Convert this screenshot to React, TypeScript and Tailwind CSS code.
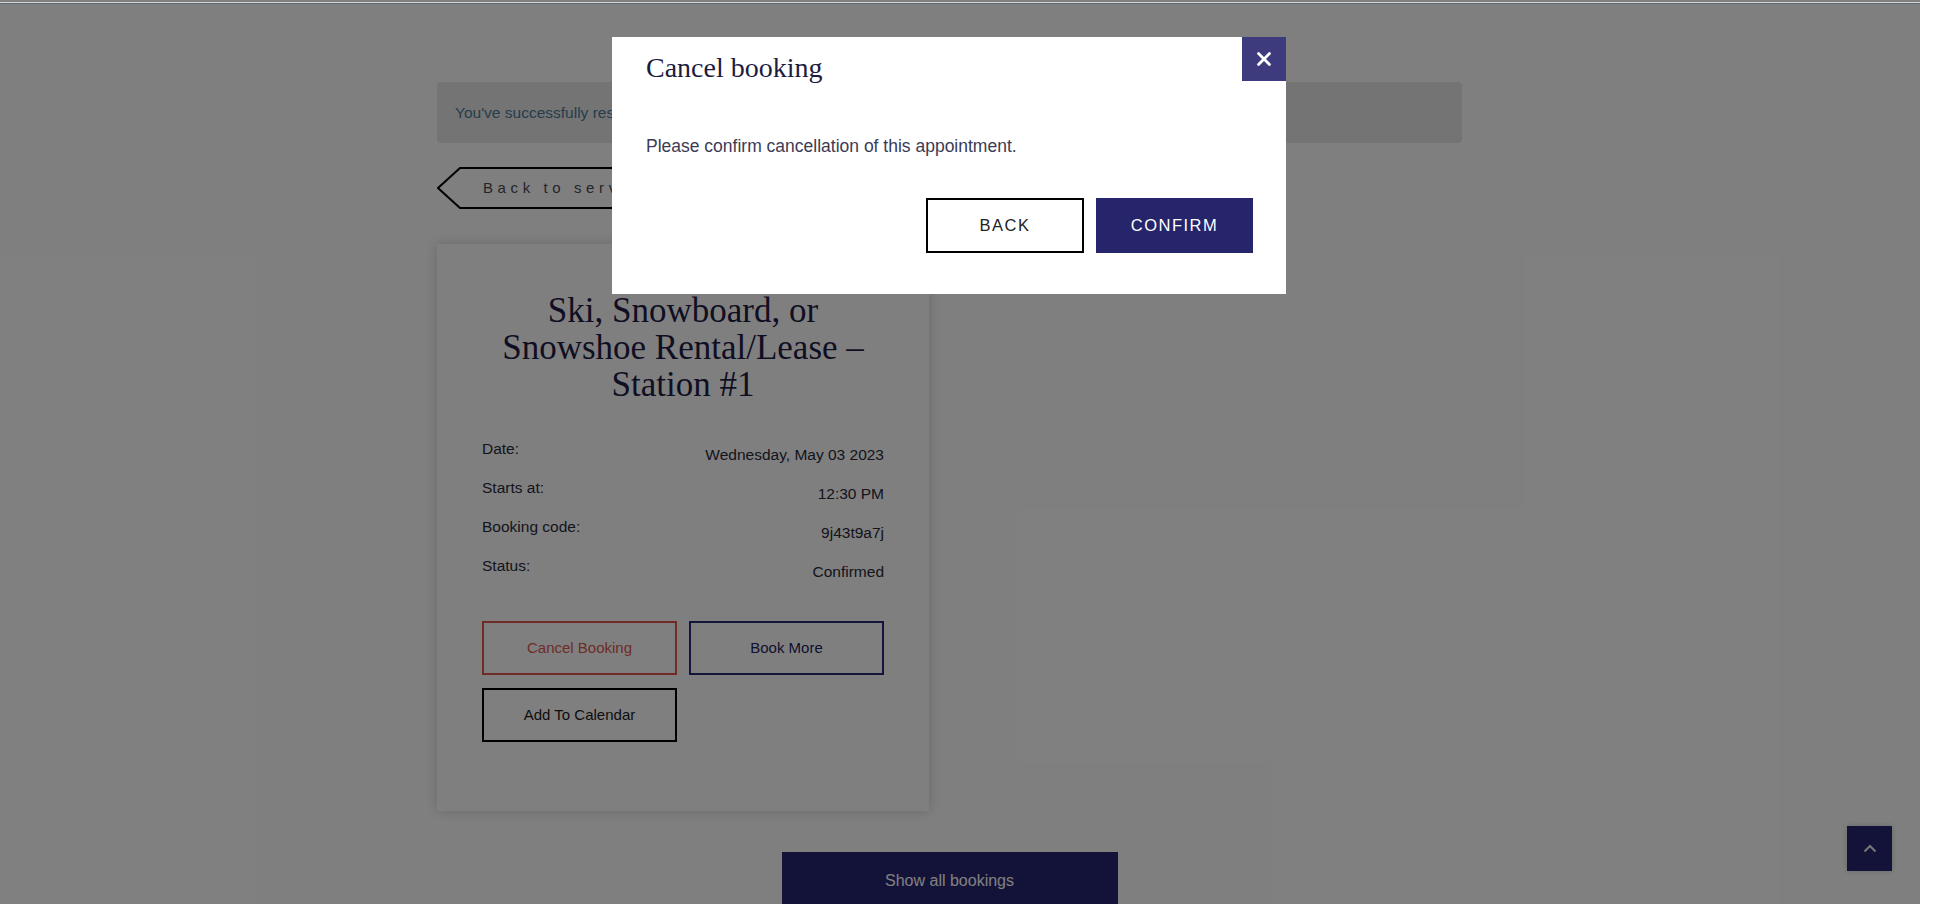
import React from 'react';

const details = [
  { label: 'Date:', value: 'Wednesday, May 03 2023' },
  { label: 'Starts at:', value: '12:30 PM' },
  { label: 'Booking code:', value: '9j43t9a7j' },
  { label: 'Status:', value: 'Confirmed' },
];

const sans = "font-['Liberation_Sans',Arial,sans-serif]";
const serif = "font-['Liberation_Serif','Times_New_Roman',serif]";

function BackToServices() {
  return (
    <div className="relative h-[42px] w-[270px] mt-[24px]">
      {/* arrow-shaped outline */}
      <svg className="absolute inset-0" width="270" height="42" viewBox="0 0 270 42">
        <polygon points="1,21 23,1 269,1 269,41 23,41" fill="none" stroke="#000" strokeWidth="2" />
      </svg>
      <span className={`relative flex h-full items-center pl-[46px] text-[15px] tracking-[4.6px] text-[#4a4a55] ${sans}`}>
        Back to services
      </span>
    </div>
  );
}

function BookingCard() {
  return (
    <div className="mt-[35px] w-[492px] h-[567px] bg-white px-[45px] pt-[48px] shadow-[0_0_12px_rgba(0,0,0,0.18)]">
      <h2 className={`text-center text-[35px] leading-[37px] text-[#1f1d45] ${serif}`}>
        Ski, Snowboard, or Snowshoe Rental/Lease – Station #1
      </h2>

      <div className={`mt-[34px] ${sans} text-[15.5px] leading-[24px] text-[#2a2a3a]`}>
        {details.map(row => (
          <div key={row.label} className="flex h-[39px] items-start justify-between">
            <span>{row.label}</span>
            <span className="pt-[6px]">{row.value}</span>
          </div>
        ))}
      </div>

      <div className={`mt-[28px] grid grid-cols-2 gap-x-[12px] gap-y-[13px] ${sans} text-[15px]`}>
        <button className="h-[54px] border-2 border-[#e0584b] text-[#dc5a4e]">Cancel Booking</button>
        <button className="h-[54px] border-2 border-[#282878] text-[#24245e]">Book More</button>
        <button className="h-[54px] border-2 border-black text-[#1a1a22]">Add To Calendar</button>
      </div>
    </div>
  );
}

function CancelModal() {
  return (
    <div className="absolute left-[612px] top-[37px] z-20 w-[674px] h-[257px] bg-white pt-[13px] pl-[34px] pr-[33px]">
      <button className="absolute right-0 top-0 flex h-[44px] w-[44px] items-center justify-center bg-[#3d3a7d]">
        <svg width="16" height="16" viewBox="0 0 16 16">
          <path d="M2.5 2.5 L13.5 13.5 M13.5 2.5 L2.5 13.5" stroke="#fff" strokeWidth="2.8" strokeLinecap="round" />
        </svg>
      </button>
      <h3 className={`text-[28px] leading-[36px] text-[#1c1c3e] ${serif}`}>Cancel booking</h3>
      <p className={`mt-[48px] text-[17.5px] leading-[24px] text-[#3b3b55] ${sans}`}>
        Please confirm cancellation of this appointment.
      </p>
      <div className={`mt-[40px] flex justify-end gap-[12px] ${sans} text-[16.5px] tracking-[1.5px]`}>
        <button className="h-[55px] w-[158px] border-2 border-black text-[#222]">BACK</button>
        <button className="h-[55px] w-[157px] bg-[#26246b] text-white">CONFIRM</button>
      </div>
    </div>
  );
}

export default function App() {
  return (
    <div className="flex h-[904px] overflow-hidden bg-white">
      <div className="relative w-[1920px] h-full">
        {/* page behind the dialog */}
        <div className="ml-[437px] w-[1025px] pt-[82px] flex flex-col">
          <div className={`flex h-[61px] items-center rounded-[4px] bg-[#e9e9e9] px-[18px] text-[15.5px] text-[#4a7c9c] ${sans}`}>
            You've successfully reserved your appointment. A confirmation email has been sent.
          </div>

          <BackToServices />
          <BookingCard />

          <button className={`mx-auto mt-[41px] h-[57px] w-[336px] bg-[#262472] text-[16px] text-white ${sans}`}>
            Show all bookings
          </button>
        </div>

        <button className="absolute right-[28px] bottom-[33px] flex h-[45px] w-[45px] items-center justify-center bg-[#262472] shadow-[0_0_6px_rgba(0,0,0,0.2)]">
          <svg width="14" height="9" viewBox="0 0 14 9">
            <path d="M1.5 7.5 L7 2 L12.5 7.5" fill="none" stroke="#f0f0f0" strokeWidth="2" />
          </svg>
        </button>

        {/* dim overlay */}
        <div className="absolute inset-0 z-10 bg-black/50" />
        <div className="absolute left-0 top-[2px] z-10 h-[1px] w-full bg-[#d4d4d4]" />
        <div className="absolute left-0 top-[3px] z-10 h-[1px] w-full bg-[#4a5866] opacity-60" />

        <CancelModal />
      </div>
      <div className="w-[14px] bg-white" />
    </div>
  );
}
